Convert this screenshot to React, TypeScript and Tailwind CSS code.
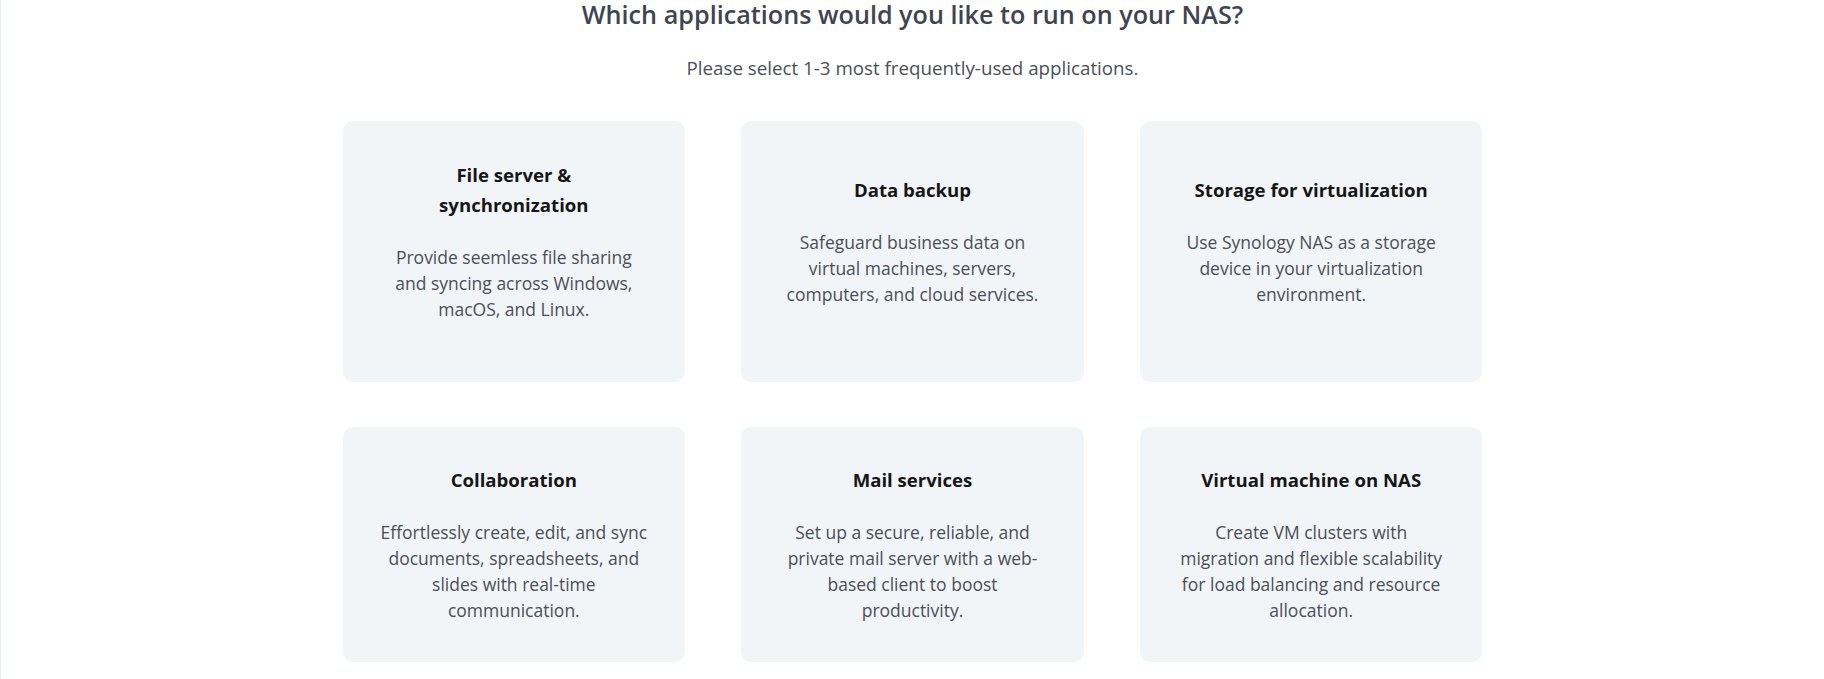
import React from 'react';

type Application = {
  title: string;
  description: string;
};

const applications: Application[] = [
  {
    title: 'File server & synchronization',
    description: 'Provide seemless file sharing and syncing across Windows, macOS, and Linux.',
  },
  {
    title: 'Data backup',
    description: 'Safeguard business data on virtual machines, servers, computers, and cloud services.',
  },
  {
    title: 'Storage for virtualization',
    description: 'Use Synology NAS as a storage device in your virtualization environment.',
  },
  {
    title: 'Collaboration',
    description: 'Effortlessly create, edit, and sync documents, spreadsheets, and slides with real-time communication.',
  },
  {
    title: 'Mail services',
    description: 'Set up a secure, reliable, and private mail server with a web-based client to boost productivity.',
  },
  {
    title: 'Virtual machine on NAS',
    description: 'Create VM clusters with migration and flexible scalability for load balancing and resource allocation.',
  },
];

function AppCard({ app, firstRow }: { app: Application; firstRow: boolean }) {
  return (
    <button
      type="button"
      className={
        firstRow
          ? 'flex flex-col justify-center rounded-[10px] bg-[#f2f5f8] px-[37px] pt-[39px] pb-[60px] text-center'
          : 'flex flex-col justify-center rounded-[10px] bg-[#f2f5f8] px-[37px] pt-[38px] pb-[39px] text-center'
      }
    >
      <h3 className="mx-auto max-w-[250px] text-[18.6px] leading-[30px] font-bold text-[#161616]">{app.title}</h3>
      <p className="mt-[24px] text-[17.5px] leading-[26px] text-[#4a4f57]">{app.description}</p>
    </button>
  );
}

export default function App() {
  return (
    <div
      className="min-h-screen border-l border-[#e9eef3] bg-white"
      style={{ fontFamily: '"Open Sans", "Noto Sans", sans-serif' }}
    >
      {/* Heading */}
      <div className="text-center">
        <h2 className="text-[25.2px] leading-[28px] font-semibold text-[#3e4550]">
          Which applications would you like to run on your NAS?
        </h2>
        <p className="mt-[26px] text-[18.75px] leading-[28px] text-[#4a4f57]">
          Please select 1-3 most frequently-used applications.
        </p>
      </div>

      {/* Application cards */}
      <div className="mx-auto mt-[39px] grid w-[1140px] grid-cols-3 gap-x-[56px] gap-y-[45px]">
        {applications.map((app, i) => (
          <AppCard key={app.title} app={app} firstRow={i < 3} />
        ))}
      </div>
    </div>
  );
}
